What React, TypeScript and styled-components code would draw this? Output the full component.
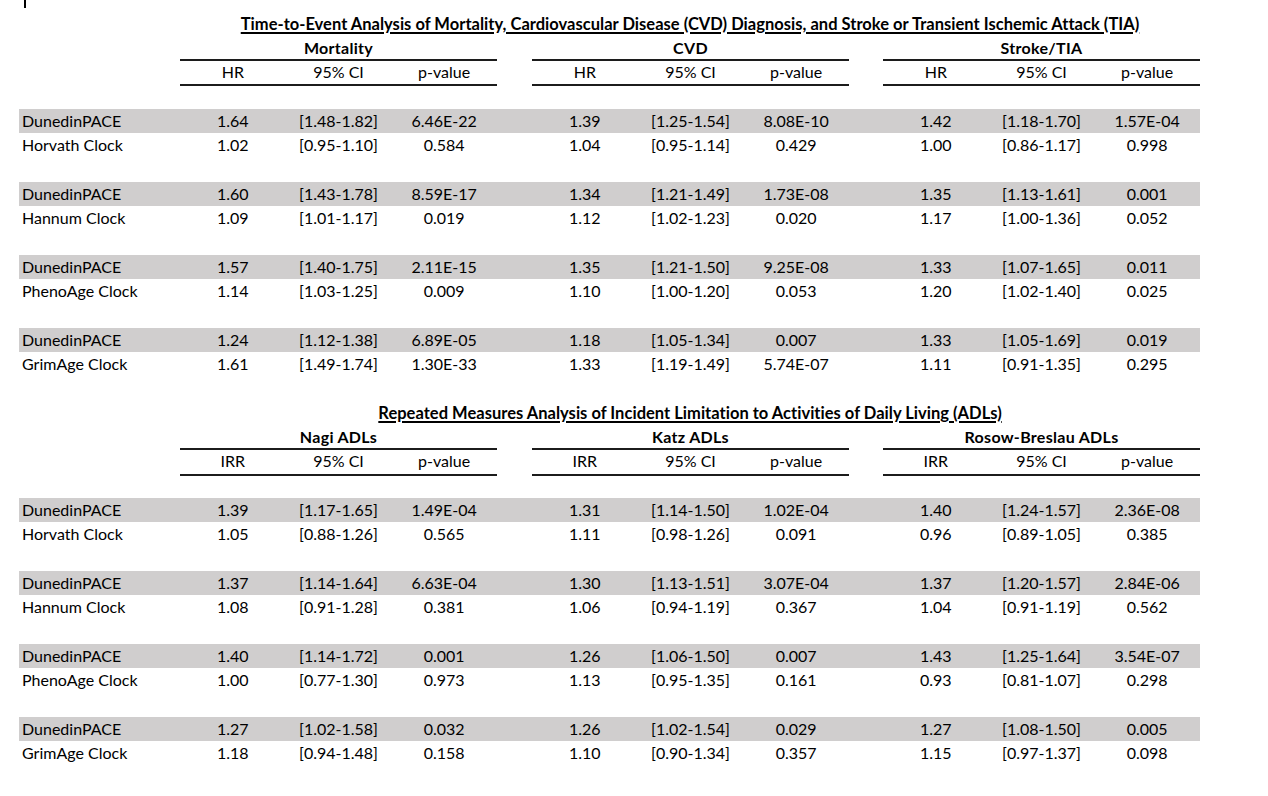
import { Fragment } from 'react';
import styled, { createGlobalStyle } from 'styled-components';

const GlobalStyle = createGlobalStyle`
  body {
    margin: 0;
    background: #ffffff;
    color: #000000;
    font-family: Lato, 'Open Sans', sans-serif;
    font-size: 16px;
  }
`;

type Cell = [string, string, string];
type DataRow = { label: string; cells: [Cell, Cell, Cell] };
type TableData = {
  title: string;
  groups: [string, string, string];
  stat: string;
  pairs: [DataRow, DataRow][];
};

const eventTable: TableData = {
  title:
    'Time-to-Event Analysis of Mortality, Cardiovascular Disease (CVD) Diagnosis, and Stroke or Transient Ischemic Attack (TIA)',
  groups: ['Mortality', 'CVD', 'Stroke/TIA'],
  stat: 'HR',
  pairs: [
    [
      { label: 'DunedinPACE', cells: [['1.64', '[1.48-1.82]', '6.46E-22'], ['1.39', '[1.25-1.54]', '8.08E-10'], ['1.42', '[1.18-1.70]', '1.57E-04']] },
      { label: 'Horvath Clock', cells: [['1.02', '[0.95-1.10]', '0.584'], ['1.04', '[0.95-1.14]', '0.429'], ['1.00', '[0.86-1.17]', '0.998']] },
    ],
    [
      { label: 'DunedinPACE', cells: [['1.60', '[1.43-1.78]', '8.59E-17'], ['1.34', '[1.21-1.49]', '1.73E-08'], ['1.35', '[1.13-1.61]', '0.001']] },
      { label: 'Hannum Clock', cells: [['1.09', '[1.01-1.17]', '0.019'], ['1.12', '[1.02-1.23]', '0.020'], ['1.17', '[1.00-1.36]', '0.052']] },
    ],
    [
      { label: 'DunedinPACE', cells: [['1.57', '[1.40-1.75]', '2.11E-15'], ['1.35', '[1.21-1.50]', '9.25E-08'], ['1.33', '[1.07-1.65]', '0.011']] },
      { label: 'PhenoAge Clock', cells: [['1.14', '[1.03-1.25]', '0.009'], ['1.10', '[1.00-1.20]', '0.053'], ['1.20', '[1.02-1.40]', '0.025']] },
    ],
    [
      { label: 'DunedinPACE', cells: [['1.24', '[1.12-1.38]', '6.89E-05'], ['1.18', '[1.05-1.34]', '0.007'], ['1.33', '[1.05-1.69]', '0.019']] },
      { label: 'GrimAge Clock', cells: [['1.61', '[1.49-1.74]', '1.30E-33'], ['1.33', '[1.19-1.49]', '5.74E-07'], ['1.11', '[0.91-1.35]', '0.295']] },
    ],
  ],
};

const adlTable: TableData = {
  title: 'Repeated Measures Analysis of Incident Limitation to Activities of Daily Living (ADLs)',
  groups: ['Nagi ADLs', 'Katz ADLs', 'Rosow-Breslau ADLs'],
  stat: 'IRR',
  pairs: [
    [
      { label: 'DunedinPACE', cells: [['1.39', '[1.17-1.65]', '1.49E-04'], ['1.31', '[1.14-1.50]', '1.02E-04'], ['1.40', '[1.24-1.57]', '2.36E-08']] },
      { label: 'Horvath Clock', cells: [['1.05', '[0.88-1.26]', '0.565'], ['1.11', '[0.98-1.26]', '0.091'], ['0.96', '[0.89-1.05]', '0.385']] },
    ],
    [
      { label: 'DunedinPACE', cells: [['1.37', '[1.14-1.64]', '6.63E-04'], ['1.30', '[1.13-1.51]', '3.07E-04'], ['1.37', '[1.20-1.57]', '2.84E-06']] },
      { label: 'Hannum Clock', cells: [['1.08', '[0.91-1.28]', '0.381'], ['1.06', '[0.94-1.19]', '0.367'], ['1.04', '[0.91-1.19]', '0.562']] },
    ],
    [
      { label: 'DunedinPACE', cells: [['1.40', '[1.14-1.72]', '0.001'], ['1.26', '[1.06-1.50]', '0.007'], ['1.43', '[1.25-1.64]', '3.54E-07']] },
      { label: 'PhenoAge Clock', cells: [['1.00', '[0.77-1.30]', '0.973'], ['1.13', '[0.95-1.35]', '0.161'], ['0.93', '[0.81-1.07]', '0.298']] },
    ],
    [
      { label: 'DunedinPACE', cells: [['1.27', '[1.02-1.58]', '0.032'], ['1.26', '[1.02-1.54]', '0.029'], ['1.27', '[1.08-1.50]', '0.005']] },
      { label: 'GrimAge Clock', cells: [['1.18', '[0.94-1.48]', '0.158'], ['1.10', '[0.90-1.34]', '0.357'], ['1.15', '[0.97-1.37]', '0.098']] },
    ],
  ],
};

// sheet columns: label | group | gap | group | gap | group
const Sheet = styled.div`
  margin-left: 19px;
  width: 1181px;
`;

const CaretRow = styled.div`
  height: 11.5px;
  padding-left: 5px;
  box-sizing: border-box;
`;

const Caret = styled.div`
  width: 2px;
  height: 8px;
  background: #000;
`;

const Row = styled.div<{ $shade?: boolean }>`
  display: grid;
  grid-template-columns: 161px 317px 35px 317px 34px 317px;
  height: 24.33px;
  line-height: 24.33px;
  background: ${(p) => (p.$shade ? '#d0cece' : 'transparent')};
  white-space: nowrap;
`;

const TitleRow = styled.div`
  height: 24.33px;
  line-height: 24.33px;
  padding-left: 161px;
  text-align: center;
  font-weight: 700;
  font-size: 16.5px;
  white-space: nowrap;
`;

const Title = styled.span`
  text-decoration: underline;
  text-decoration-thickness: 1.5px;
  text-underline-offset: 2px;
  letter-spacing: 0.02px;
`;

const Label = styled.div`
  padding-left: 3px;
`;

const GroupHead = styled.div`
  text-align: center;
  font-weight: 700;
  letter-spacing: 0.3px;
  line-height: 23px;
  border-bottom: 2px solid #1c1c1c;
  box-sizing: border-box;
`;

const Trio = styled.div<{ $rule?: boolean }>`
  display: grid;
  grid-template-columns: repeat(3, 1fr);
  text-align: center;
  box-sizing: border-box;
  border-bottom: ${(p) => (p.$rule ? '2px solid #1c1c1c' : 'none')};
`;

const Gap = styled.div``;

function Groups({ items, rule }: { items: Cell[]; rule?: boolean }) {
  return (
    <>
      {items.map((cell, i) => (
        <Fragment key={i}>
          {i > 0 && <Gap />}
          <Trio $rule={rule}>
            {cell.map((v, j) => (
              <div key={j}>{v}</div>
            ))}
          </Trio>
        </Fragment>
      ))}
    </>
  );
}

function Table({ data }: { data: TableData }) {
  const head: Cell = [data.stat, '95% CI', 'p-value'];
  return (
    <>
      <TitleRow>
        <Title>{data.title}</Title>
      </TitleRow>
      <Row>
        <Label />
        <GroupHead>{data.groups[0]}</GroupHead>
        <Gap />
        <GroupHead>{data.groups[1]}</GroupHead>
        <Gap />
        <GroupHead>{data.groups[2]}</GroupHead>
      </Row>
      <Row>
        <Label />
        <Groups items={[head, head, head]} rule />
      </Row>
      {data.pairs.map((pair, i) => (
        <div key={i}>
          <Row />
          {pair.map((r, j) => (
            <Row key={j} $shade={j === 0}>
              <Label>{r.label}</Label>
              <Groups items={r.cells} />
            </Row>
          ))}
        </div>
      ))}
    </>
  );
}

function App() {
  return (
    <Sheet>
      <GlobalStyle />
      <CaretRow>
        <Caret />
      </CaretRow>
      <Table data={eventTable} />
      <Row />
      <Table data={adlTable} />
    </Sheet>
  );
}

export default App;
